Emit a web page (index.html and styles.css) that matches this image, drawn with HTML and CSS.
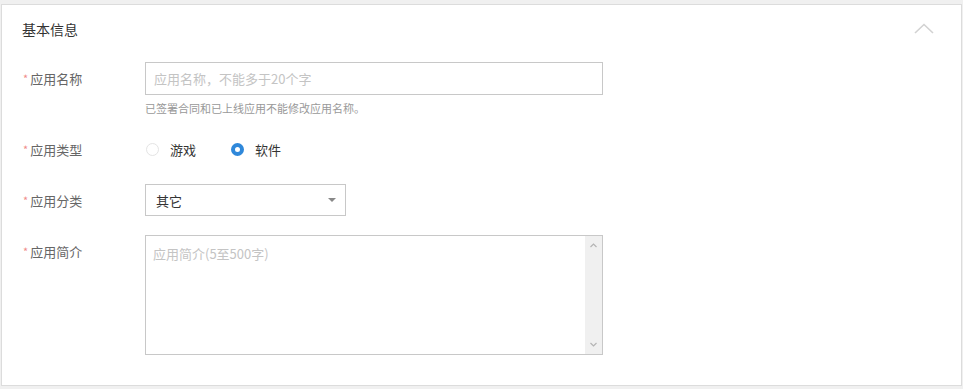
FILE: index.html
```html
<!DOCTYPE html>
<html lang="zh-CN">
<head>
  <meta charset="UTF-8" />
  <title>基本信息</title>
  <link rel="stylesheet" href="styles.css">
</head>
<body>

  <div class="card">
    <div class="card-head">
      <h3>基本信息</h3>
      <svg class="fold" width="20" height="11" viewBox="0 0 20 11">
        <path d="M1 10 L10 1.5 L19 10" fill="none" stroke="#d2d2d2" stroke-width="1.6" />
      </svg>
    </div>

    <form class="form">
      <div class="form-row">
        <label class="label"><span class="req">*</span>应用名称</label>
        <div class="field">
          <input class="text-input" type="text" placeholder="应用名称，不能多于20个字">
          <p class="hint">已签署合同和已上线应用不能修改应用名称。</p>
        </div>
      </div>

      <div class="form-row">
        <label class="label"><span class="req">*</span>应用类型</label>
        <div class="field radios">
          <label class="radio"><input type="radio" name="type"> 游戏</label>
          <label class="radio"><input type="radio" name="type" checked> 软件</label>
        </div>
      </div>

      <div class="form-row">
        <label class="label"><span class="req">*</span>应用分类</label>
        <div class="field">
          <div class="select">
            <span>其它</span>
            <i class="caret"></i>
          </div>
        </div>
      </div>

      <div class="form-row">
        <label class="label"><span class="req">*</span>应用简介</label>
        <div class="field">
          <div class="textarea-box">
            <textarea placeholder="应用简介(5至500字)"></textarea>
            <div class="scrollbar">
              <svg width="7" height="5" viewBox="0 0 7 5"><path d="M0.5 4 L3.5 1 L6.5 4" fill="none" stroke="#b4b4b4" stroke-width="1.2" /></svg>
              <svg width="7" height="5" viewBox="0 0 7 5"><path d="M0.5 1 L3.5 4 L6.5 1" fill="none" stroke="#b4b4b4" stroke-width="1.2" /></svg>
            </div>
          </div>
        </div>
      </div>
    </form>
  </div>

</body>
</html>
```

FILE: styles.css
```css
* {
  margin: 0;
  padding: 0;
  box-sizing: border-box;
}

body {
  font-family: "Noto Sans CJK SC", "Liberation Sans", sans-serif;
  font-size: 13px;
  background: #f0f0f0;
  color: #333;
  padding: 4px 1px;
}

.card {
  background: #fff;
  border: 1px solid #dcdcdc;
  padding: 0 27px 30px 20px;
}

.card-head {
  display: flex;
  justify-content: space-between;
  align-items: center;
  padding-top: 14px;
}

.card-head h3 {
  font-size: 14px;
  font-weight: normal;
  line-height: 20px;
  color: #333;
}

.fold {
  margin-top: -2px;
}

.form {
  padding-top: 23px;
}

.form-row {
  display: flex;
  align-items: flex-start;
  margin-bottom: 18px;
}

.form-row:last-child {
  margin-bottom: 0;
}

.label {
  width: 123px;
  flex-shrink: 0;
  line-height: 32px;
  color: #666;
  padding-left: 1px;
}

.req {
  color: #f08a8a;
  font-size: 11px;
  margin-right: 2px;
  vertical-align: 1px;
}

.text-input {
  display: block;
  width: 458px;
  height: 33px;
  border: 1px solid #c8c8c8;
  padding: 0 8px;
  font-family: inherit;
  font-size: 13px;
  color: #333;
  outline: none;
}

.text-input::placeholder,
textarea::placeholder {
  color: #c4c4c4;
}

.hint {
  margin-top: 7px;
  font-size: 11px;
  line-height: 13px;
  color: #999;
}

.radios {
  display: flex;
  align-items: center;
  height: 32px;
  gap: 34px;
}

.radio {
  display: flex;
  align-items: center;
  gap: 11px;
  color: #333;
}

.radio input {
  appearance: none;
  width: 13px;
  height: 13px;
  border-radius: 50%;
  border: 1px solid #e4e4e4;
  margin-left: 1px;
}

.radio input:checked {
  border: 4px solid #2f88da;
}

.select {
  width: 201px;
  height: 32px;
  border: 1px solid #c8c8c8;
  display: flex;
  align-items: center;
  justify-content: space-between;
  padding: 0 9px 0 10px;
  color: #333;
}

.caret {
  width: 0;
  height: 0;
  border-left: 4px solid transparent;
  border-right: 4px solid transparent;
  border-top: 4px solid #888;
}

.textarea-box {
  display: flex;
  width: 458px;
  height: 120px;
  border: 1px solid #c8c8c8;
}

.textarea-box textarea {
  flex: 1;
  border: none;
  resize: none;
  outline: none;
  padding: 8px 7px;
  font-family: inherit;
  font-size: 13px;
  line-height: 20px;
  color: #333;
}

.scrollbar {
  width: 17px;
  background: #f0f0f0;
  display: flex;
  flex-direction: column;
  justify-content: space-between;
  align-items: center;
  padding: 7px 0;
}
```
